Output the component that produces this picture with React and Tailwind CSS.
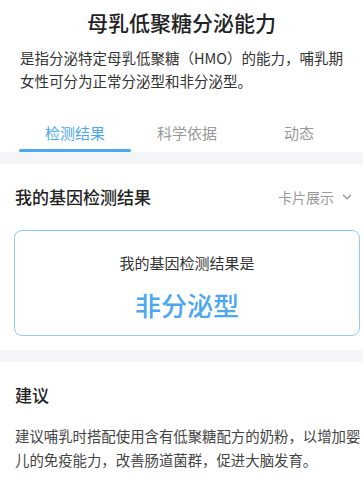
import React, { useState } from 'react';
import { ChevronDown } from 'lucide-react';

const tabs = ['检测结果', '科学依据', '动态'];

const App = () => {
  const [active, setActive] = useState(0);

  return (
    <div
      className="w-[363px] min-h-[483px] bg-white text-[#333]"
      style={{ fontFamily: '"Noto Sans CJK SC", "Noto Sans", sans-serif' }}
    >
      {/* Header */}
      <div className="pt-[10px]">
        <h1 className="text-center text-[21px] leading-[24px] font-medium text-[#222]">
          母乳低聚糖分泌能力
        </h1>
        <p className="mt-3 pl-[20px] pr-[8px] text-[14.5px] leading-[23px] text-[#333]">
          是指分泌特定母乳低聚糖（HMO）的能力，哺乳期女性可分为正常分泌型和非分泌型。
        </p>

        <div className="mt-[31px] flex pl-[19px] pr-[8px]">
          {tabs.map((t, i) => (
            <button
              key={t}
              onClick={() => setActive(i)}
              className="flex flex-1 flex-col items-center"
            >
              <span
                className={
                  'pb-[6px] text-[15px] leading-[20px] ' +
                  (i === active ? 'text-[#4ba8f0]' : 'text-[#999]')
                }
              >
                {t}
              </span>
              <span className={'h-[3px] w-full rounded-full ' + (i === active ? 'bg-[#4ba8f0]' : 'bg-transparent')} />
            </button>
          ))}
        </div>
      </div>

      <div className="h-[12px] bg-[#f4f5f7]" />

      {/* Result */}
      <div className="pt-[22px] pb-[14px]">
        <div className="flex items-center justify-between pl-[15px] pr-[9px]">
          <h2 className="text-[17px] leading-[22px] font-medium text-[#222]">我的基因检测结果</h2>
          <div className="flex items-center gap-[6px] text-[14px] leading-[20px] text-[#999]">
            卡片展示
            <ChevronDown size={14} strokeWidth={2.5} />
          </div>
        </div>

        <div className="mt-[22px] ml-[14px] mr-[3px] rounded-[8px] border border-[#8ecbf5] pt-[22px] pb-[14px] text-center">
          <p className="text-[15px] leading-[20px] text-[#333]">我的基因检测结果是</p>
          <p className="mt-[16px] text-[26px] leading-[32px] font-medium text-[#4ba8f0]">非分泌型</p>
        </div>
      </div>

      <div className="h-[12px] bg-[#f4f5f7]" />

      {/* Advice */}
      <div className="pt-[22px] pb-[16px] pl-[15px] pr-[1px]">
        <h2 className="text-[17px] leading-[22px] font-medium text-[#222]">建议</h2>
        <p className="mt-[18px] text-[14.4px] leading-[24px] text-[#444]">
          建议哺乳时搭配使用含有低聚糖配方的奶粉，以增加婴儿的免疫能力，改善肠道菌群，促进大脑发育。
        </p>
      </div>
    </div>
  );
};

export default App;
